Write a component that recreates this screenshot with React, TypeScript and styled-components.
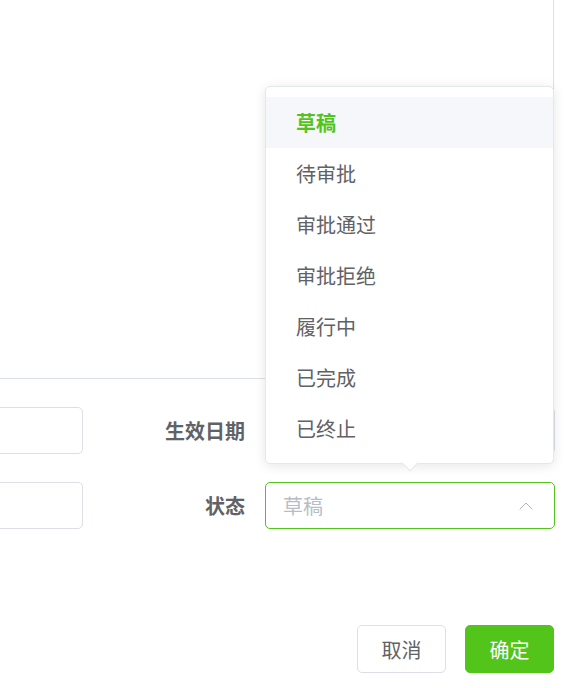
import React from 'react';
import styled, { createGlobalStyle } from 'styled-components';
import { ChevronUp } from 'lucide-react';

const GREEN = '#52c41a';
const FONT = '"Noto Sans CJK SC", "Noto Sans", "Liberation Sans", sans-serif';

const GlobalStyle = createGlobalStyle`
  html, body {
    margin: 0;
    padding: 0;
    background: #ffffff;
    overflow: hidden;
  }
  body {
    width: 567px;
    height: 688px;
    font-family: ${FONT};
  }
  * {
    box-sizing: border-box;
  }
`;

const DialogBody = styled.div`
  width: 715px;
  margin-left: -160px;
`;

const TextArea = styled.div`
  width: 714px;
  height: 409px;
  margin-top: -30px;
  border: 1px solid #dcdfe6;
  border-radius: 4px;
  background: #ffffff;
`;

const Form = styled.div`
  padding-top: 28px;
`;

const Row = styled.div`
  display: grid;
  grid-template-columns: 243px 182px 290px;
  height: 47px;
  margin-bottom: 28px;
  align-items: center;
`;

const Input = styled.div`
  height: 47px;
  border: 1px solid #dcdfe6;
  border-radius: 5px;
  background: #ffffff;
`;

const Label = styled.div`
  text-align: right;
  padding-right: 20px;
  font-size: 20px;
  font-weight: 700;
  color: #606266;
  line-height: 47px;
`;

const Field = styled.div`
  position: relative;
  width: 290px;
  height: 47px;
`;

const Select = styled.div<{ $active?: boolean }>`
  height: 47px;
  display: flex;
  align-items: center;
  justify-content: space-between;
  padding: 0 16px 0 17px;
  border: 1px solid ${(p) => (p.$active ? GREEN : '#dcdfe6')};
  border-radius: 5px;
  background: #ffffff;
  color: #b8bcc4;
  font-size: 20px;
`;

const Dropdown = styled.div`
  position: absolute;
  left: 0;
  right: 1px;
  bottom: calc(100% + 18px);
  padding: 10px 0 9px;
  background: #ffffff;
  border: 1px solid #e4e7ed;
  border-radius: 5px;
  box-shadow: 0 2px 12px rgba(0, 0, 0, 0.1);
  z-index: 10;

  &::after {
    content: '';
    position: absolute;
    left: 50%;
    bottom: -6px;
    width: 11px;
    height: 11px;
    margin-left: -6px;
    background: #ffffff;
    border-right: 1px solid #e4e7ed;
    border-bottom: 1px solid #e4e7ed;
    transform: rotate(45deg);
  }
`;

const Option = styled.div<{ $selected?: boolean }>`
  height: 51px;
  line-height: 51px;
  padding-left: 30px;
  font-size: 20px;
  color: ${(p) => (p.$selected ? GREEN : '#606266')};
  font-weight: ${(p) => (p.$selected ? 700 : 400)};
  background: ${(p) => (p.$selected ? '#f5f7fa' : 'transparent')};
`;

const Footer = styled.div`
  display: flex;
  justify-content: flex-end;
  gap: 19px;
  margin-top: 96px;
  padding-right: 1px;
  width: 555px;
  margin-left: 160px;
`;

const Button = styled.button<{ $primary?: boolean }>`
  height: 48px;
  width: 89px;
  border-radius: 5px;
  font-family: ${FONT};
  font-size: 20px;
  border: 1px solid ${(p) => (p.$primary ? GREEN : '#dcdfe6')};
  background: ${(p) => (p.$primary ? GREEN : '#ffffff')};
  color: ${(p) => (p.$primary ? '#ffffff' : '#606266')};
  cursor: pointer;
`;

const options = ['草稿', '待审批', '审批通过', '审批拒绝', '履行中', '已完成', '已终止'];

export default function App() {
  return (
    <>
      <GlobalStyle />
      <DialogBody>
        <TextArea />
        <Form>
          <Row>
            <Input />
            <Label>生效日期</Label>
            <Field>
              <Input />
            </Field>
          </Row>
          <Row>
            <Input />
            <Label>状态</Label>
            <Field>
              <Dropdown>
                {options.map((o, i) => (
                  <Option key={o} $selected={i === 0}>
                    {o}
                  </Option>
                ))}
              </Dropdown>
              <Select $active>
                <span>草稿</span>
                <ChevronUp size={24} strokeWidth={1} color="#b0b4bc" />
              </Select>
            </Field>
          </Row>
        </Form>
        <Footer>
          <Button>取消</Button>
          <Button $primary>确定</Button>
        </Footer>
      </DialogBody>
    </>
  );
}
